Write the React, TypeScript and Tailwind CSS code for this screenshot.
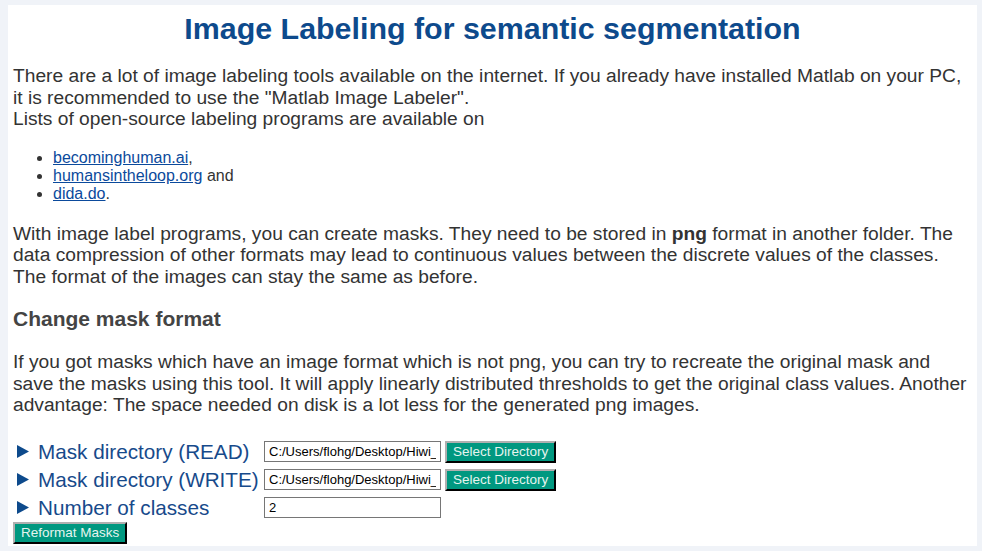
import React from 'react';

const rows = [
  { label: 'Mask directory (READ)', value: 'C:/Users/flohg/Desktop/Hiwi_', button: true },
  { label: 'Mask directory (WRITE)', value: 'C:/Users/flohg/Desktop/Hiwi_', button: true },
  { label: 'Number of classes', value: '2', button: false },
];

const links = [
  { text: 'becominghuman.ai', after: ',' },
  { text: 'humansintheloop.org', after: ' and' },
  { text: 'dida.do', after: '.' },
];

const btn =
  'bg-[#009880] text-[#e6f4ef] text-[13.5px] leading-[16px] px-[6px] py-[1px] border-2 border-t-[#b0b0b0] border-l-[#b0b0b0] border-r-black border-b-black';

export default function App() {
  return (
    <div className="h-[551px] flex flex-col bg-[#f0f3f8] pl-[8px] pr-[5px] py-[5px] font-['Liberation_Sans',Arial,sans-serif]">
      <div className="flex-1 bg-white px-[5px] pt-[6px] text-[#333] text-[19.2px] leading-[21.5px]">
        <h1 className="text-center text-[30.4px] leading-[34px] font-bold text-[#0d4a8c]">
          Image Labeling for semantic segmentation
        </h1>

        <p className="mt-[20px] pr-[6px]">
          There are a lot of image labeling tools available on the internet. If you already have installed Matlab on your PC,
          it is recommended to use the "Matlab Image Labeler".
          <br />
          Lists of open-source labeling programs are available on
        </p>

        <ul className="list-disc pl-[40px] mt-[19px] text-[16px] leading-[18px]">
          {links.map((l) => (
            <li key={l.text}>
              <a href="#" className="text-[#0b4a9c] underline">
                {l.text}
              </a>
              {l.after}
            </li>
          ))}
        </ul>

        <p className="mt-[20px]">
          With image label programs, you can create masks. They need to be stored in <b>png</b> format in another folder. The
          data compression of other formats may lead to continuous values between the discrete values of the classes.
          The format of the images can stay the same as before.
        </p>

        <h3 className="mt-[20px] text-[21px] leading-[24px] font-bold text-[#444]">Change mask format</h3>

        <p className="mt-[20px]">
          If you got masks which have an image format which is not png, you can try to recreate the original mask and
          save the masks using this tool. It will apply linearly distributed thresholds to get the original class values. Another
          advantage: The space needed on disk is a lot less for the generated png images.
        </p>

        <div className="mt-[22px] flex flex-col">
          {rows.map((r) => (
            <div key={r.label} className="flex items-center h-[28px]">
              <div className="w-[251px] flex items-center text-[#174a8b] text-[20.7px] leading-[24px] whitespace-nowrap">
                <svg width="12" height="13" viewBox="0 0 12 13" className="ml-[4px] mr-[9px] shrink-0">
                  <path d="M0 0 L12 6.5 L0 13 Z" fill="#0d4a8c" />
                </svg>
                {r.label}
              </div>
              <input
                readOnly
                value={r.value}
                className="w-[177px] h-[21px] border border-[#767676] px-[4px] text-[13px] text-black outline-none"
              />
              {r.button && <button className={`${btn} ml-[4px]`}>Select Directory</button>}
            </div>
          ))}
          <div className="mt-[-2px]">
            <button className={btn}>Reformat Masks</button>
          </div>
        </div>
      </div>
    </div>
  );
}
